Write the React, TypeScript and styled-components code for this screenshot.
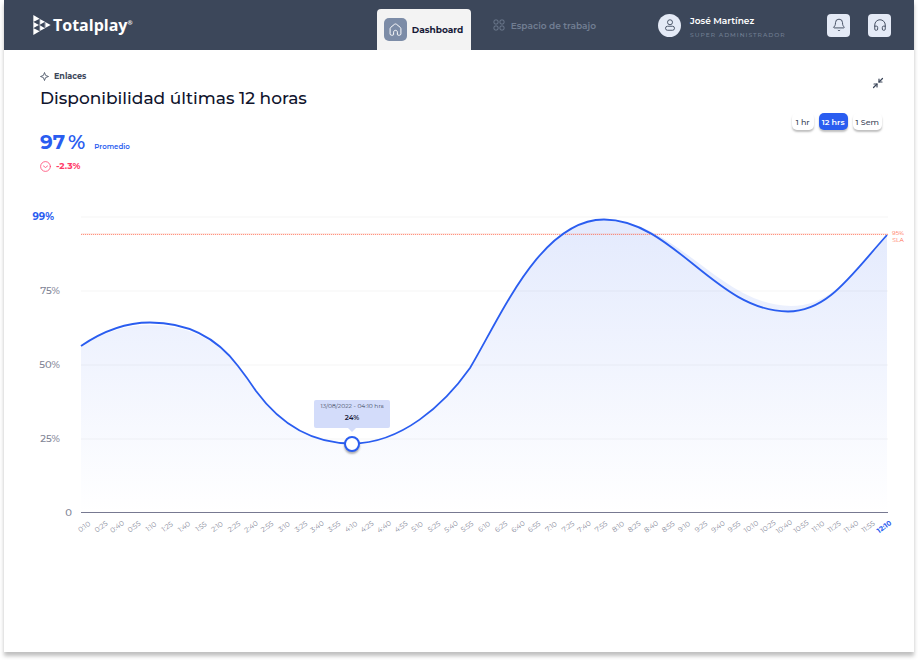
import React, { useState } from "react";
import styled, { createGlobalStyle, css } from "styled-components";
import { Bell, Headphones, Minimize2 } from "lucide-react";

const GlobalStyle = createGlobalStyle`
  *, *::before, *::after { box-sizing: border-box; }
  body {
    margin: 0;
    background: #fff;
    color: #10142d;
    font-family: Montserrat, Inter, sans-serif;
  }
  button { font: inherit; border: 0; padding: 0; cursor: pointer; }
  h1, p { margin: 0; }
`;

const Shell = styled.div`
  display: flex;
  flex-direction: column;
  min-height: calc(100vh - 8px);
  margin: 0 4px 8px;
  background: #fff;
  box-shadow: 0 4px 4px rgba(0, 0, 0, 0.25);
`;

const Header = styled.header`
  display: flex;
  align-items: center;
  height: 50px;
  padding: 0 23px 0 29px;
  background: #3c475a;
`;

const Brand = styled.a`
  display: flex;
  align-items: center;
  gap: 2px;
  margin-right: auto;
  color: #fff;
  text-decoration: none;
  font: 700 16px/20px "Open Sans", sans-serif;

  sup { font-size: 6px; line-height: 6px; align-self: flex-start; margin: 5px 0 0 -2px; }
`;

const Nav = styled.nav`
  display: flex;
  align-self: stretch;
  align-items: center;
  gap: 22px;
`;

const Tab = styled.a<{ $active?: boolean }>`
  display: flex;
  align-items: center;
  gap: 6px;
  color: #717e92;
  font-size: 9px;
  font-weight: 600;
  white-space: nowrap;
  text-decoration: none;
  ${({ $active }) =>
    $active &&
    css`
      align-self: flex-end;
      width: 94px;
      height: 41px;
      padding-left: 7px;
      gap: 5px;
      border-radius: 4px 4px 0 0;
      background: #f3f3f3;
      color: #171a38;
      font-weight: 700;
    `}
`;

const HomeTile = styled.span`
  display: grid;
  place-items: center;
  flex: none;
  width: 23px;
  height: 23px;
  border-radius: 5px;
  background: #7c8ca7;
`;

const User = styled.div`
  display: flex;
  align-items: center;
  gap: 9px;
  width: 127px;
  margin: 0 42px 0 62px;
`;

const Avatar = styled.span`
  display: grid;
  place-items: center;
  flex: none;
  width: 23px;
  height: 23px;
  border-radius: 50%;
  background: #e4eaf6;
`;

const UserText = styled.div`
  padding-top: 2px;
`;

const UserName = styled.p`
  color: #fff;
  font-size: 9px;
  font-weight: 600;
  line-height: 14px;
  white-space: nowrap;
`;

const UserRole = styled.p`
  margin-top: 3px;
  color: #717e92;
  font-size: 6px;
  font-weight: 500;
  line-height: 8px;
  letter-spacing: 1px;
  white-space: nowrap;
`;

const Actions = styled.div`
  display: flex;
  gap: 18px;
`;

const ActionButton = styled.button`
  display: grid;
  place-items: center;
  width: 23px;
  height: 23px;
  border-radius: 4px;
  background: #e4eaf6;
  color: #3c475a;
`;

const Main = styled.main`
  padding: 20px 10px 0 28px;
`;

const Intro = styled.section`
  display: flex;
  justify-content: space-between;
  padding: 0 20px 0 8px;
`;

const Eyebrow = styled.p`
  display: flex;
  align-items: center;
  gap: 5px;
  color: #3c475a;
  font-size: 8px;
  font-weight: 700;
  line-height: 12px;
`;

const Title = styled.h1`
  margin-top: 4px;
  font-size: 17px;
  font-weight: 500;
  line-height: 24px;
`;

const Average = styled.p`
  display: flex;
  align-items: baseline;
  gap: 3px;
  height: 24px;
  margin-top: 20px;
  color: #2a5df0;
  font-size: 20px;
  font-weight: 700;
  line-height: 24px;
`;

const Percent = styled.span`
  font-weight: 600;
`;

const AverageLabel = styled.small`
  margin-left: 6px;
  font-size: 7px;
  font-weight: 600;
`;

const Trend = styled.p`
  display: flex;
  align-items: center;
  gap: 5px;
  margin-top: 6px;
  color: #ff3b69;
  font-size: 9px;
  font-weight: 700;
  line-height: 12px;
`;

const Controls = styled.div`
  display: flex;
  flex-direction: column;
  align-items: flex-end;
  padding-top: 7px;
`;

const IconButton = styled.button`
  display: flex;
  background: none;
  color: #3c475a;
`;

const Ranges = styled.div`
  display: flex;
  gap: 5px;
  margin-top: 24px;
  padding-right: 2px;
`;

const RangeButton = styled.button<{ $active: boolean }>`
  min-width: 22px;
  height: 17px;
  padding: 0 3px;
  border-radius: 5px;
  font-size: 8px;
  line-height: 16px;
  font-weight: ${({ $active }) => ($active ? 600 : 500)};
  color: ${({ $active }) => ($active ? "#fff" : "#3c475a")};
  background: ${({ $active }) => ($active ? "#2a5df0" : "#fff")};
  box-shadow: 0 2px 2px rgba(0, 0, 0, 0.25);
`;

const Chart = styled.section`
  display: grid;
  grid-template-columns: 49px minmax(0, 1fr) 16px;
  margin-top: 39px;
`;

const YAxis = styled.div`
  display: flex;
  flex-direction: column;
  justify-content: space-between;
  height: 308px;
`;

const YLabel = styled.span<{ $kind: "top" | "middle" | "zero" }>`
  padding-right: ${({ $kind }) => ({ top: 27, middle: 21, zero: 9 })[$kind]}px;
  color: ${({ $kind }) => ($kind === "top" ? "#2a5df0" : "#7f8596")};
  font-size: 10px;
  font-weight: ${({ $kind }) => ($kind === "top" ? 700 : 500)};
  line-height: 12px;
  text-align: right;
`;

const Plot = styled.div`
  position: relative;
  height: 296px;
  margin-top: 6px;
`;

const Curve = styled.svg`
  display: block;
  width: 100%;
  height: 100%;
  overflow: visible;
`;

const Sla = styled.span`
  padding: 19px 0 0 4px;
  color: #ff6a4d;
  font-size: 6px;
  line-height: 7px;
  text-align: center;
`;

const Marker = styled.span`
  position: absolute;
  left: calc(33.6% - 8px);
  top: 219px;
  width: 16px;
  height: 16px;
  border: 2px solid #2a5df0;
  border-radius: 50%;
  background: #fff;
  box-shadow: 0 2px 2px rgba(0, 0, 0, 0.3);
`;

const Tooltip = styled.div`
  position: absolute;
  left: calc(33.6% - 38px);
  top: 183px;
  width: 76px;
  height: 28px;
  padding-top: 2px;
  border-radius: 2px;
  background: #d3dcfa;
  color: #3c475a;
  font-size: 6px;
  line-height: 9px;
  text-align: center;
  white-space: nowrap;

  strong {
    display: block;
    margin-top: 1px;
    color: #171a38;
    font-size: 7px;
    font-weight: 600;
    line-height: 12px;
  }

  &::after {
    content: "";
    position: absolute;
    top: 100%;
    left: 34px;
    border: 4px solid transparent;
    border-top-color: #d3dcfa;
    border-bottom: 0;
  }
`;

const XAxis = styled.div`
  display: grid;
  grid-column: 2;
  grid-auto-flow: column;
  grid-auto-columns: minmax(0, 1fr);
  margin: 2px -5px 0;
`;

const XLabel = styled.span<{ $current: boolean }>`
  display: flex;
  justify-content: center;
  color: ${({ $current }) => ($current ? "#2a5df0" : "#7f8596")};
  font-size: 7px;
  font-weight: ${({ $current }) => ($current ? 700 : 400)};
  line-height: 12px;
  white-space: nowrap;
  transform: rotate(-36deg);
`;

const times = Array.from({ length: 49 }, (_, i) => {
  const minutes = 10 + i * 15;
  return `${Math.floor(minutes / 60)}:${String(minutes % 60).padStart(2, "0")}`;
});

const LINE =
  "M0 129C22 114 45 105.500 69 105.500C102 105.500 133 117 157 149C164 158 171 168 175 174C203 212 236 226.500 271 226.500C320 226.500 363 188 389 151C420 99 460 2.500 523 2.500C592 2.500 635 94.500 707 94.500C747 94.500 770 58 806 18";
const AREA =
  "M0 130C22 115 45 108 69 108C102 108 133 119 157 150C164 159 171 168 175 174C203 212 236 226.500 271 226.500C320 226.500 363 188 389 151C420 99 460 2.500 523 2.500C595 2.500 640 89 710 89C750 89 770 58 806 18V296H0Z";

function LogoMark() {
  return (
    <svg width="18" height="20" viewBox="0 0 52 60" fill="#fff" aria-hidden="true">
      <path d="M0 0L19 11L0 21ZM0 20L18 30L0 40ZM0 39L19 49L0 60ZM18 11L35 20L18 30ZM18 30L35 40L18 49ZM34 20L52 30L34 40Z" />
      <path d="M3 21L18 29M3 39L18 31M19 12V28M19 32V48M35 22V38" stroke="#3c475a" strokeWidth="2" />
    </svg>
  );
}

function HomeIcon() {
  return (
    <svg width="13" height="13" viewBox="0 0 24 24" fill="none" stroke="#fff" strokeWidth="1.800" strokeLinejoin="round" aria-hidden="true">
      <path d="M2 10.500C2 9.500 2.500 8.700 3.300 8L10 2.500C11.200 1.500 12.800 1.500 14 2.500L20.700 8C21.500 8.700 22 9.500 22 10.500V20C22 21.500 21 22.500 19.500 22.500H17C16 22.500 15.500 22 15.500 21V17C15.500 15 14 13.500 12 13.500S8.500 15 8.500 17V21C8.500 22 8 22.500 7 22.500H4.500C3 22.500 2 21.500 2 20Z" />
    </svg>
  );
}

function TilesIcon() {
  return (
    <svg width="12" height="12" viewBox="0 0 12 12" fill="none" stroke="#717e92" aria-hidden="true">
      <rect x="1" y="1" width="4" height="4" rx="1.300" />
      <rect x="7" y="1" width="4" height="4" rx="1.300" />
      <rect x="1" y="7" width="4" height="4" rx="1.300" />
      <rect x="7" y="7" width="4" height="4" rx="1.300" />
    </svg>
  );
}

function PersonIcon() {
  return (
    <svg width="12" height="12" viewBox="0 0 24 24" fill="none" stroke="#3c475a" strokeWidth="1.800" aria-hidden="true">
      <circle cx="12" cy="6.500" r="5" />
      <rect x="3" y="14.500" width="18" height="8" rx="4" />
    </svg>
  );
}

function SparkIcon() {
  return (
    <svg width="9" height="9" viewBox="0 0 18 18" fill="none" stroke="#3c475a" strokeWidth="1.600" strokeLinejoin="round" aria-hidden="true">
      <path d="M9 1L11.200 6.800L17 9L11.200 11.200L9 17L6.800 11.200L1 9L6.800 6.800Z" />
    </svg>
  );
}

function DownIcon() {
  return (
    <svg width="11" height="11" viewBox="0 0 22 22" fill="none" stroke="#ff3b69" strokeWidth="1.500" strokeLinecap="round" aria-hidden="true">
      <circle cx="11" cy="11" r="9.800" />
      <path d="M7 10L11 13L15 10" />
    </svg>
  );
}

export default function App() {
  const [range, setRange] = useState("12 hrs");

  return (
    <>
      <GlobalStyle />
      <Shell>
        <Header>
          <Brand href="#">
            <LogoMark />
            <span>Totalplay</span>
            <sup>®</sup>
          </Brand>
          <Nav>
            <Tab href="#dashboard" $active aria-current="page">
              <HomeTile><HomeIcon /></HomeTile>
              Dashboard
            </Tab>
            <Tab href="#workspace">
              <TilesIcon />
              Espacio de trabajo
            </Tab>
          </Nav>
          <User>
            <Avatar><PersonIcon /></Avatar>
            <UserText>
              <UserName>José Martínez</UserName>
              <UserRole>SUPER ADMINISTRADOR</UserRole>
            </UserText>
          </User>
          <Actions>
            <ActionButton aria-label="Notificaciones"><Bell size={14} strokeWidth={1.6} /></ActionButton>
            <ActionButton aria-label="Soporte"><Headphones size={14} strokeWidth={1.6} /></ActionButton>
          </Actions>
        </Header>

        <Main>
          <Intro>
            <div>
              <Eyebrow><SparkIcon />Enlaces</Eyebrow>
              <Title>Disponibilidad últimas 12 horas</Title>
              <Average>
                <span>97</span>
                <Percent>%</Percent>
                <AverageLabel>Promedio</AverageLabel>
              </Average>
              <Trend><DownIcon />-2.3%</Trend>
            </div>
            <Controls>
              <IconButton aria-label="Contraer"><Minimize2 size={12} strokeWidth={2.4} /></IconButton>
              <Ranges>
                {["1 hr", "12 hrs", "1 Sem"].map((label) => (
                  <RangeButton
                    key={label}
                    $active={range === label}
                    aria-pressed={range === label}
                    onClick={() => setRange(label)}
                  >
                    {label}
                  </RangeButton>
                ))}
              </Ranges>
            </Controls>
          </Intro>

          <Chart>
            <YAxis>
              <YLabel $kind="top">99%</YLabel>
              <YLabel $kind="middle">75%</YLabel>
              <YLabel $kind="middle">50%</YLabel>
              <YLabel $kind="middle">25%</YLabel>
              <YLabel $kind="zero">0</YLabel>
            </YAxis>
            <Plot>
              <Curve viewBox="0 0 807 296" preserveAspectRatio="none" aria-hidden="true">
                <defs>
                  <linearGradient id="area" x1="0" y1="0" x2="0" y2="1">
                    <stop offset="0" stopColor="#2a5df0" stopOpacity="0.13" />
                    <stop offset="1" stopColor="#2a5df0" stopOpacity="0" />
                  </linearGradient>
                </defs>
                <path d={AREA} fill="url(#area)" />
                <path d="M0 0H807M0 74H807M0 148H807M0 222H807" stroke="#000" strokeOpacity="0.04" />
                <path d="M0 17H807" stroke="#ff5a3c" strokeWidth="2" strokeOpacity="0.12" />
                <path d="M0 17.500H807" stroke="#ff5a3c" strokeOpacity="0.6" strokeDasharray="1 1" />
                <path d="M0 295.500H807" stroke="#777991" />
                <path d={LINE} fill="none" stroke="#2a5df0" strokeWidth="1.800" vectorEffect="non-scaling-stroke" />
              </Curve>
              <Tooltip>
                13/08/2022 - 04:10 hrs
                <strong>24%</strong>
              </Tooltip>
              <Marker />
            </Plot>
            <Sla>95% SLA</Sla>
            <XAxis>
              {times.map((time, i) => (
                <XLabel key={time} $current={i === times.length - 1}>{time}</XLabel>
              ))}
            </XAxis>
          </Chart>
        </Main>
      </Shell>
    </>
  );
}
